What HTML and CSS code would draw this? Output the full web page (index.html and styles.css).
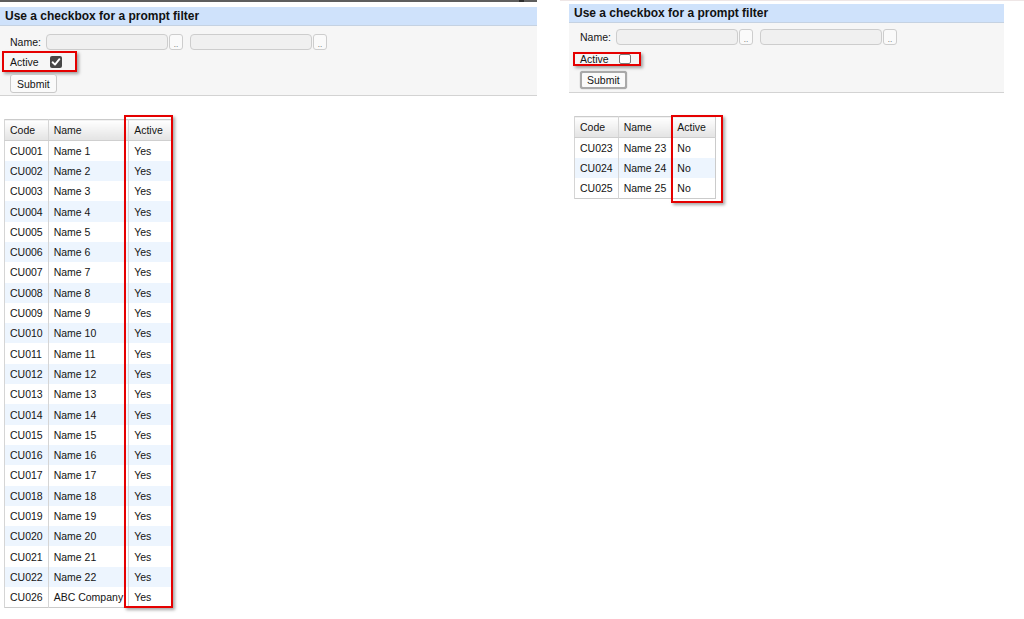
FILE: index.html
```html
<!DOCTYPE html>
<html>
  <head>
    <meta charset="utf-8" />
    <title>Prompt filter</title>
    <link rel="stylesheet" href="styles.css">
  </head>
  <body>
    <!-- checked: all active customers -->
    <div class="shot shot-a">
      <div class="topbar"><span class="thumb"></span></div>
      <div class="prompt prompt-a">
        <div class="prompt-title">Use a checkbox for a prompt filter</div>
        <div class="prompt-body">
          <div class="field">
            <label>Name:</label>
            <span class="text-in"></span><span class="pick">..</span>
            <span class="text-in"></span><span class="pick">..</span>
          </div>
          <div class="check-row">
            <span class="mark">
              <label>Active</label>
              <span class="cb cb-on">
                <svg width="12" height="12" viewBox="0 0 12 12"><path d="M2.6 6.3 L5 8.6 L9.4 3.2" fill="none" stroke="#fff" stroke-width="1.9" stroke-linecap="round" stroke-linejoin="round"/></svg>
              </span>
            </span>
          </div>
          <button class="btn">Submit</button>
        </div>
      </div>

      <div class="grid-wrap grid-wrap-a">
        <table class="grid">
          <thead>
            <tr><th>Code</th><th>Name</th><th>Active</th></tr>
          </thead>
          <tbody id="rowsA"></tbody>
        </table>
        <div class="col-mark col-mark-a"></div>
      </div>
    </div>

    <!-- unchecked: inactive customers -->
    <div class="shot shot-b">
      <div class="prompt prompt-b">
        <div class="prompt-title">Use a checkbox for a prompt filter</div>
        <div class="prompt-body">
          <div class="field">
            <label>Name:</label>
            <span class="text-in"></span><span class="pick">..</span>
            <span class="text-in"></span><span class="pick">..</span>
          </div>
          <div class="check-row">
            <span class="mark">
              <label>Active</label>
              <span class="cb"></span>
            </span>
          </div>
          <button class="btn btn-focus">Submit</button>
        </div>
      </div>

      <div class="grid-wrap grid-wrap-b">
        <table class="grid">
          <thead>
            <tr><th>Code</th><th>Name</th><th>Active</th></tr>
          </thead>
          <tbody id="rowsB"></tbody>
        </table>
        <div class="col-mark col-mark-b"></div>
      </div>
    </div>

    <script>
      "use strict";

      function pad(n) {
        return ("00" + n).slice(-3);
      }

      function fill(tbody, rows) {
        let html = "";
        for (let i = 0; i < rows.length; i++) {
          html += "<tr><td>CU" + pad(rows[i][0]) + "</td><td>" + rows[i][1] +
            "</td><td>" + rows[i][2] + "</td></tr>";
        }
        tbody.innerHTML = html;
      }

      const active = [];
      for (let i = 1; i <= 22; i++) {
        active.push([i, "Name " + i, "Yes"]);
      }
      active.push([26, "ABC Company", "Yes"]);

      const inactive = [];
      for (let i = 23; i <= 25; i++) {
        inactive.push([i, "Name " + i, "No"]);
      }

      fill(document.querySelector("#rowsA"), active);
      fill(document.querySelector("#rowsB"), inactive);
    </script>
  </body>
</html>
```

FILE: styles.css
```css
body {
  margin: 0;
  height: 619px;
  overflow: hidden;
  display: flex;
  background: #fff;
  font-family: "Liberation Sans", Arial, sans-serif;
  font-size: 10.5px;
  color: #141414;
}

.shot {
  display: flex;
  flex-direction: column;
  align-items: flex-start;
}
.shot-a {
  width: 560px;
}
.shot-b {
  flex: 1;
  border-top: 1px solid #eee6e6;
}

.topbar {
  display: flex;
  justify-content: flex-end;
  width: 537px;
  height: 2px;
  background: #5e5e5e;
}
.topbar .thumb {
  width: 5px;
  margin-right: 13px;
  background: #2e2e2e;
}

/* prompt panel */
.prompt {
  background: #f6f6f6;
  border-bottom: 1px solid #d3d3d3;
}
.prompt-a {
  width: 537px;
  margin-top: 5px;
}
.prompt-b {
  width: 435px;
  margin: 3px 0 0 9px;
}
.prompt-title {
  height: 18px;
  line-height: 18px;
  padding-left: 5px;
  background: #cfe2fb;
  border-bottom: 1px solid #c5d2e2;
  font-size: 12px;
  font-weight: bold;
  color: #111;
}
.prompt-body {
  display: flex;
  flex-direction: column;
  align-items: flex-start;
  padding-left: 10px;
}
.prompt-a .prompt-body {
  padding-top: 8px;
}
.prompt-b .prompt-body {
  padding-top: 6px;
  padding-left: 11px;
  padding-bottom: 3px;
}

.field {
  display: flex;
  align-items: center;
  height: 16px;
}
.field label {
  margin-right: 5px;
}
.text-in {
  width: 122px;
  height: 16px;
  box-sizing: border-box;
  border: 1px solid #cdcdcd;
  border-radius: 4px;
  background: #f0f0f0;
}
.pick {
  display: flex;
  align-items: flex-end;
  justify-content: center;
  width: 14px;
  height: 16px;
  margin-left: 1px;
  box-sizing: border-box;
  border: 1px solid #cdcdcd;
  border-radius: 3px;
  background: #fafafa;
  font-size: 8px;
  line-height: 8px;
  color: #555;
}
.pick + .text-in {
  margin-left: 7px;
}

/* red callout round the checkbox */
.check-row {
  display: flex;
}
.mark {
  display: flex;
  align-items: center;
  border: 2px solid #e50000;
  box-shadow: 2px 2px 3px rgba(0, 0, 0, 0.35);
}
.prompt-a .check-row {
  margin: 1px 0 0 -8px;
}
.prompt-a .mark {
  height: 17px;
  padding: 0 13px 0 6px;
}
.prompt-b .check-row {
  margin: 7px 0 0 -7px;
}
.prompt-b .mark {
  height: 10px;
  padding: 0 8px 0 5px;
}
.cb {
  display: inline-block;
  box-sizing: border-box;
  border-radius: 2px;
}
.prompt-a .cb {
  margin-left: 11px;
  margin-top: 1px;
}
.prompt-b .cb {
  margin-left: 10px;
  width: 12px;
  height: 10px;
  border: 1px solid #7a7a7a;
  background: #fff;
}
.cb-on {
  width: 12px;
  height: 12px;
  background: #474747;
}
.cb-on svg {
  display: block;
}

.btn {
  height: 19px;
  padding: 0 6px;
  border: 1px solid #c9c9c9;
  border-radius: 3px;
  background: #fafafa;
  font-family: inherit;
  font-size: 10.5px;
  color: #141414;
}
.prompt-a .btn {
  margin-top: 2px;
  margin-bottom: 2px;
}
.prompt-b .btn {
  margin-top: 5px;
  height: 18px;
  padding: 0 5px;
}
.btn-focus {
  border: 2px solid #a9a9a9;
  box-shadow: 0 0 1px #888;
}

/* result grid */
.grid-wrap {
  position: relative;
}
.grid-wrap-a {
  margin: 23px 0 0 4px;
}
.grid-wrap-b {
  margin: 23px 0 0 14px;
}
.grid {
  border-collapse: collapse;
  border: 1px solid #cbcbcb;
}
.grid th,
.grid td {
  padding: 0 5px;
  text-align: left;
  white-space: nowrap;
  border-left: 1px solid #d5d5d5;
}
.grid th:last-child,
.grid td:last-child {
  padding-right: 9px;
}
.grid thead tr {
  height: 21px;
}
.grid th {
  font-weight: normal;
  background: linear-gradient(#ffffff, #e3e3e3);
  border-bottom: 1px solid #cfcfcf;
}
.grid tbody tr {
  height: 20.3px;
}
.grid tbody tr:nth-child(even) td {
  background: #edf5fe;
}

.col-mark {
  position: absolute;
  border: 2px solid #e50000;
  box-shadow: 2px 2px 3px rgba(0, 0, 0, 0.35);
}
.col-mark-a {
  left: 120px;
  top: -4px;
  width: 45px;
  height: 489px;
}
.col-mark-b {
  left: 97px;
  top: -1px;
  width: 48px;
  height: 84px;
}
```
